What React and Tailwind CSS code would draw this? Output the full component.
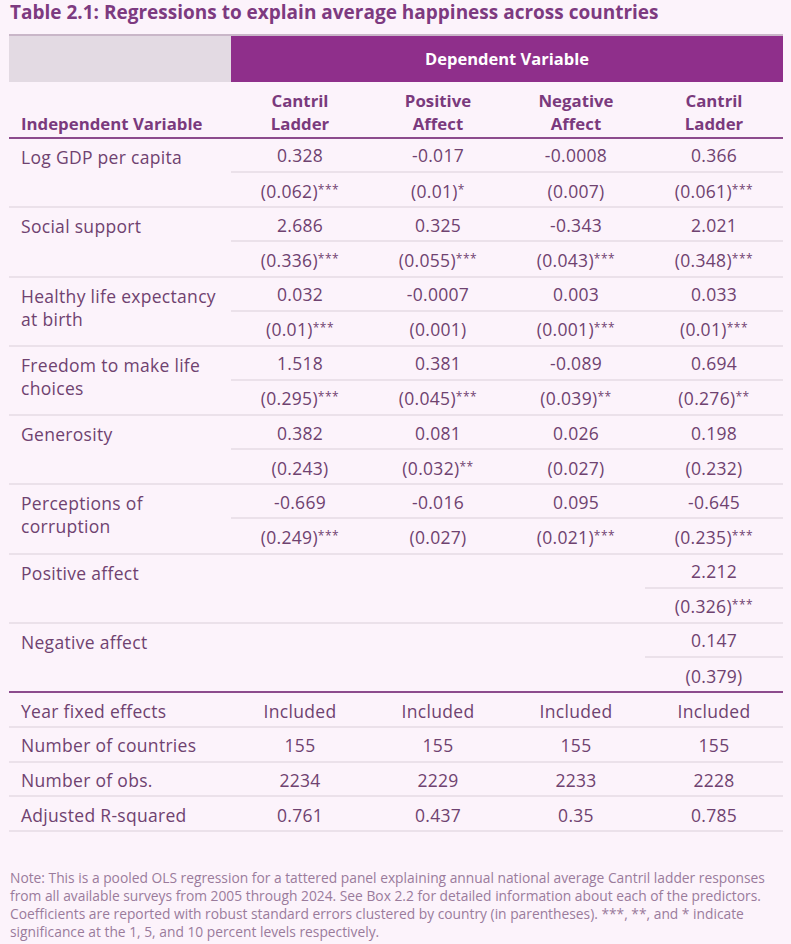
const cols = ["Cantril Ladder", "Positive Affect", "Negative Affect", "Cantril Ladder"];

const groups = [
  { label: "Log GDP per capita", coef: ["0.328", "-0.017", "-0.0008", "0.366"], se: ["(0.062)***", "(0.01)*", "(0.007)", "(0.061)***"] },
  { label: "Social support", coef: ["2.686", "0.325", "-0.343", "2.021"], se: ["(0.336)***", "(0.055)***", "(0.043)***", "(0.348)***"] },
  { label: "Healthy life expectancy at birth", coef: ["0.032", "-0.0007", "0.003", "0.033"], se: ["(0.01)***", "(0.001)", "(0.001)***", "(0.01)***"] },
  { label: "Freedom to make life choices", coef: ["1.518", "0.381", "-0.089", "0.694"], se: ["(0.295)***", "(0.045)***", "(0.039)**", "(0.276)**"] },
  { label: "Generosity", coef: ["0.382", "0.081", "0.026", "0.198"], se: ["(0.243)", "(0.032)**", "(0.027)", "(0.232)"] },
  { label: "Perceptions of corruption", coef: ["-0.669", "-0.016", "0.095", "-0.645"], se: ["(0.249)***", "(0.027)", "(0.021)***", "(0.235)***"] },
  { label: "Positive affect", coef: ["", "", "", "2.212"], se: ["", "", "", "(0.326)***"] },
  { label: "Negative affect", coef: ["", "", "", "0.147"], se: ["", "", "", "(0.379)"] },
];

const stats = [
  ["Year fixed effects", "Included", "Included", "Included", "Included"],
  ["Number of countries", "155", "155", "155", "155"],
  ["Number of obs.", "2234", "2229", "2233", "2228"],
  ["Adjusted R-squared", "0.761", "0.437", "0.35", "0.785"],
];

// splits "(0.062)***" so the stars can be drawn smaller
function Val({ v }) {
  const m = v.match(/^(.*?)(\*+)$/);
  if (!m) return <span>{v}</span>;
  return (
    <span>
      {m[1]}
      <span className="text-[12px] align-[4px] tracking-[0.5px]">{m[2]}</span>
    </span>
  );
}

function Group({ g, last }) {
  return (
    <div className={"grid grid-cols-[222px_repeat(4,138px)] " + (last ? "" : "border-b-2 border-[#ebe1ea]")}>
      <div className="row-span-2 pl-[12px] pt-[7px] pr-1 leading-[23px]">{g.label}</div>
      {g.coef.map((c, i) => (
        <div key={"c" + i} className={"h-[34px] pt-[1px] flex items-center justify-center " + (c ? "border-b-2 border-[#ebe1ea]" : "")}>
          {c}
        </div>
      ))}
      {g.se.map((s, i) => (
        <div key={"s" + i} className="h-[33.3px] pt-[2px] flex items-center justify-center">
          <Val v={s} />
        </div>
      ))}
    </div>
  );
}

export default function App() {
  return (
    <div className="min-h-screen w-[791px] bg-[#fcf3fb] text-[#6f4270] font-['Open_Sans',sans-serif] pt-[1px]">
      <h1 className="pl-[10px] text-[19px] font-bold text-[#7d3a80] leading-[22px]">
        Table 2.1: Regressions to explain average happiness across countries
      </h1>

      <div className="ml-[9px] w-[774px] mt-[11px] text-[17.5px] tracking-[0.3px]">
        <div className="grid grid-cols-[222px_1fr] h-[48px] border-t-2 border-[#c9b6c8]">
          <div className="bg-[#e3dae3]" />
          <div className="bg-[#8f2f8b] text-white text-[16.5px] tracking-normal font-bold flex items-center justify-center">Dependent Variable</div>
        </div>

        <div className="grid grid-cols-[222px_repeat(4,138px)] h-[57px] border-b-2 border-[#8c4b8d] font-bold text-[16.8px] tracking-normal text-[#7a3a7d] leading-[23px]">
          <div className="flex items-end pl-[12px] pb-[2px]">Independent Variable</div>
          {cols.map((c, i) => (
            <div key={i} className="flex items-end justify-center text-center pb-[2px]">
              <span className="w-[80px]">{c}</span>
            </div>
          ))}
        </div>

        {groups.map((g, i) => (
          <Group key={i} g={g} last={i === groups.length - 1} />
        ))}

        <div className="border-t-2 border-[#8c4b8d]">
          {stats.map((r, i) => (
            <div key={i} className="grid grid-cols-[222px_repeat(4,138px)] h-[34.7px] pt-[2px] border-b-2 border-[#ebe1ea]">
              <div className="flex items-center pl-[12px]">{r[0]}</div>
              {r.slice(1).map((v, j) => (
                <div key={j} className="flex items-center justify-center">{v}</div>
              ))}
            </div>
          ))}
        </div>
      </div>

      <p className="mt-[37px] pl-[10px] pr-[12px] text-[13.8px] leading-[18px] text-[#9a7b9b]">
        Note: This is a pooled OLS regression for a tattered panel explaining annual national average Cantril ladder responses from all available surveys from 2005 through 2024. See Box 2.2 for detailed information about each of the predictors. Coefficients are reported with robust standard errors clustered by country (in parentheses). ***, **, and * indicate significance at the 1, 5, and 10 percent levels respectively.
      </p>
    </div>
  );
}
